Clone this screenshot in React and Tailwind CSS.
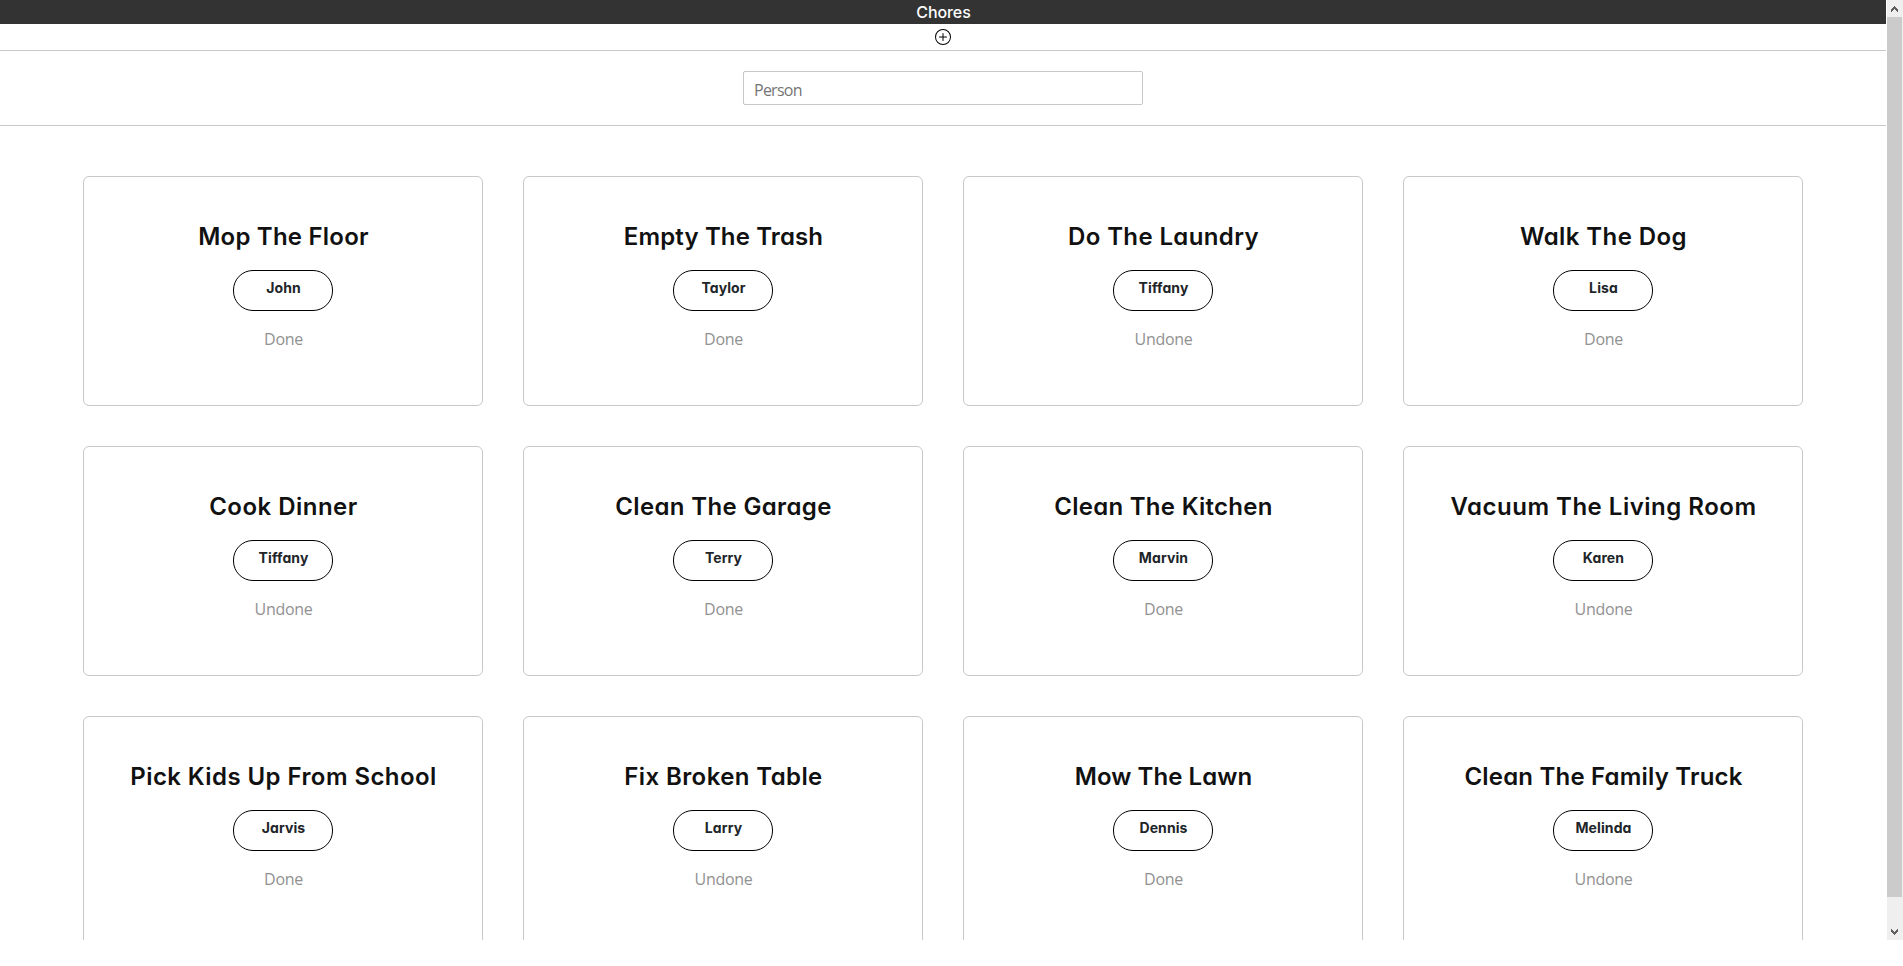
import { BsPlusCircle } from "react-icons/bs";

const chores = [
  { title: "Mop The Floor", person: "John", done: true, tracking: "tracking-[0.22px]" },
  { title: "Empty The Trash", person: "Taylor", done: true, tracking: "tracking-[0.13px]" },
  { title: "Do The Laundry", person: "Tiffany", done: false, tracking: "tracking-[0.37px]" },
  { title: "Walk The Dog", person: "Lisa", done: true, tracking: "tracking-[0.43px]" },
  { title: "Cook Dinner", person: "Tiffany", done: false, tracking: "tracking-[0.48px]" },
  { title: "Clean The Garage", person: "Terry", done: true, tracking: "tracking-[0.35px]" },
  { title: "Clean The Kitchen", person: "Marvin", done: true, tracking: "tracking-[0.28px]" },
  { title: "Vacuum The Living Room", person: "Karen", done: false, tracking: "tracking-[0.5px]" },
  { title: "Pick Kids Up From School", person: "Jarvis", done: true, tracking: "tracking-[0.42px]" },
  { title: "Fix Broken Table", person: "Larry", done: false, tracking: "tracking-[0.4px]" },
  { title: "Mow The Lawn", person: "Dennis", done: true, tracking: "tracking-[0.07px]" },
  { title: "Clean The Family Truck", person: "Melinda", done: false, tracking: "tracking-[0.2px]" },
];

function ChoreCard({ title, person, done, tracking }) {
  return (
    <article className="flex h-[230px] w-[400px] flex-col items-center rounded-[6px] border border-[#c8c8c8] pt-11">
      <h2 className={`pl-px text-2xl font-semibold text-[#111] ${tracking}`}>{title}</h2>
      <div className="mt-[17px] h-[41px] w-[100px] rounded-[20px] border border-black pt-[7px] pl-px text-center text-sm font-bold tracking-[0.1px] text-[#212529]">
        {person}
      </div>
      <p className="mt-4 pl-px font-['Open_Sans',sans-serif] text-base tracking-[-0.3px] text-[#919191]">
        {done ? "Done" : "Undone"}
      </p>
    </article>
  );
}

function Chevron({ d }) {
  return (
    <svg className="mr-px" width="7" height="6" viewBox="0 0 7 6" fill="#606060" shapeRendering="crispEdges">
      <path d={d} />
    </svg>
  );
}

function Scrollbar() {
  return (
    <div className="flex w-4 flex-col items-center bg-[#efefef]">
      <div className="flex h-[17px] items-center">
        <Chevron d="M3 0h1v1h1v1h1v1h1v3h-1v-1h-1v-1h-1v-1h-1v1h-1v1h-1v1h-1v-3h1v-1h1v-1h1z" />
      </div>
      <div className="mr-px h-[880px] w-[15px] bg-[#cbcbcb]" />
      <div className="mt-auto flex h-[17px] items-center">
        <Chevron d="M3 6h1v-1h1v-1h1v-1h1v-3h-1v1h-1v1h-1v1h-1v-1h-1v-1h-1v-1h-1v3h1v1h1v1h1z" />
      </div>
    </div>
  );
}

export default function App() {
  return (
    <div className="h-[966px] bg-white font-['Inter',sans-serif] [font-feature-settings:'cv11']">
      <div className="flex h-[940px] gap-px overflow-hidden">
        <div className="w-[1886px]">
          <header className="h-6 bg-[#333] pl-px text-center text-base font-medium tracking-[-0.1px] text-white">Chores</header>
          <div className="flex h-[27px] justify-center border-b border-[#c8c8c8] pt-[5px]">
            <button type="button" aria-label="Add chore" className="h-4">
              <BsPlusCircle size={16} color="#000" />
            </button>
          </div>
          <div className="flex h-[75px] items-center justify-center border-b border-[#c8c8c8]">
            <input
              type="text"
              placeholder="Person"
              className="h-[34px] w-[400px] rounded-[2px] border border-[#c8c8c8] px-2.5 pt-[3px] font-['Open_Sans',sans-serif] text-base tracking-[-0.75px] placeholder:text-[#757575]"
            />
          </div>
          <main className="grid grid-cols-[repeat(4,400px)] justify-center gap-10 pt-[50px]">
            {chores.map((chore) => (
              <ChoreCard key={chore.title} {...chore} />
            ))}
          </main>
        </div>
        <Scrollbar />
      </div>
    </div>
  );
}
